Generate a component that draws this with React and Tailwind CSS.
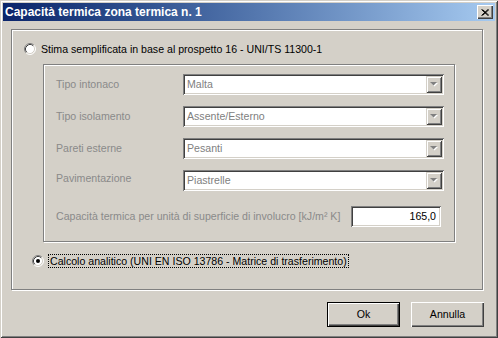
import React from 'react';

const font = { fontFamily: '"Liberation Sans", Arial, sans-serif' };

const Radio = ({ checked }) => (
  <svg width="12" height="12" viewBox="0 0 12 12" className="shrink-0">
    <circle cx="6" cy="6" r="5" fill="#ffffff" />
    <path d="M2.11 9.89 A5.5 5.5 0 0 1 9.89 2.11" fill="none" stroke="#808080" />
    <path d="M9.89 2.11 A5.5 5.5 0 0 1 2.11 9.89" fill="none" stroke="#ffffff" />
    <path d="M2.82 9.18 A4.5 4.5 0 0 1 9.18 2.82" fill="none" stroke="#404040" />
    <path d="M9.18 2.82 A4.5 4.5 0 0 1 2.82 9.18" fill="none" stroke="#d4d0c8" />
    {checked && <circle cx="6" cy="6" r="2" fill="#000000" />}
  </svg>
);

const Select = ({ value }) => (
  <div className="w-[261px] h-[21px] bg-white flex items-center shadow-[inset_1px_1px_0_#808080,inset_-1px_-1px_0_#ffffff,inset_2px_2px_0_#404040,inset_-2px_-2px_0_#d4d0c8] p-[2px]">
    <span className="flex-1 pl-[2px] text-[10.6px] text-[#808080] leading-none">{value}</span>
    <div className="w-[16px] h-[17px] bg-[#d4d0c8] flex items-center justify-center shadow-[inset_1px_1px_0_#d4d0c8,inset_-1px_-1px_0_#404040,inset_2px_2px_0_#ffffff,inset_-2px_-2px_0_#808080]">
      <svg width="8" height="5" viewBox="0 0 8 5">
        <path d="M1 1 H8 L4.5 4.5 Z" fill="#ffffff" />
        <path d="M0 0 H7 L3.5 3.5 Z" fill="#808080" />
      </svg>
    </div>
  </div>
);

const Row = ({ label, value, lift }) => (
  <div className="flex items-center h-[21px]">
    <span className={`w-[127px] text-[10.6px] text-[#8a8a8a] leading-none ${lift ? 'pb-[4px]' : ''}`}>
      {label}
    </span>
    <Select value={value} />
  </div>
);

export default function App() {
  return (
    <div
      style={font}
      className="w-[498px] h-[338px] bg-[#d4d0c8] p-[3px] flex flex-col shadow-[inset_1px_1px_0_#d4d0c8,inset_-1px_-1px_0_#404040,inset_2px_2px_0_#ffffff,inset_-2px_-2px_0_#808080]"
    >
      {/* Title bar */}
      <div className="h-[18px] flex items-center justify-between pl-[2px] pr-[2px] bg-gradient-to-r from-[#0a246a] to-[#a6caf0]">
        <span className="text-white font-bold text-[12px] leading-none">
          Capacità termica zona termica n. 1
        </span>
        <div className="w-[16px] h-[14px] bg-[#d4d0c8] flex items-center justify-center shadow-[inset_1px_1px_0_#ffffff,inset_-1px_-1px_0_#404040,inset_-2px_-2px_0_#808080]">
          <svg width="8" height="7" viewBox="0 0 8 7">
            <path d="M0.5 0.5 L7 6.5 M7 0.5 L0.5 6.5 M1.5 0.5 L8 6.5 M8 0.5 L1.5 6.5" stroke="#000000" strokeWidth="1" />
          </svg>
        </div>
      </div>

      {/* Outer group */}
      <div className="mt-[8px] ml-[8px] w-[472px] h-[261px] border border-[#808080] shadow-[1px_1px_0_#ffffff,inset_1px_1px_0_#ffffff] flex flex-col">
        <div className="mt-[13px] ml-[12px] h-[12px] flex items-center gap-[5px]">
          <Radio />
          <span className="text-[10.6px] text-black leading-none whitespace-nowrap">
            Stima semplificata in base al prospetto 16 - UNI/TS 11300-1
          </span>
        </div>

        {/* Inner group */}
        <div className="mt-[9px] ml-[31px] w-[412px] h-[178px] border border-[#808080] shadow-[1px_1px_0_#ffffff,inset_1px_1px_0_#ffffff] flex flex-col gap-[11px] pt-[9px] pl-[12px]">
          <Row label="Tipo intonaco" value="Malta" />
          <Row label="Tipo isolamento" value="Assente/Esterno" />
          <Row label="Pareti esterne" value="Pesanti" />
          <Row label="Pavimentazione" value="Piastrelle" lift />
          <div className="mt-[4px] flex items-center h-[21px]">
            <span className="w-[295px] shrink-0 whitespace-nowrap text-[10.6px] text-[#8a8a8a] leading-none">
              Capacità termica per unità di superficie di involucro [kJ/m² K]
            </span>
            <div className="w-[90px] h-[21px] bg-white flex items-center justify-end pr-[5px] shadow-[inset_1px_1px_0_#808080,inset_-1px_-1px_0_#ffffff,inset_2px_2px_0_#404040,inset_-2px_-2px_0_#d4d0c8]">
              <span className="text-[10.6px] text-black leading-none">165,0</span>
            </div>
          </div>
        </div>

        <div className="mt-[13px] ml-[20px] h-[12px] flex items-center gap-[4px]">
          <Radio checked />
          <span className="text-[10.6px] text-black leading-none whitespace-nowrap border border-dotted border-black px-[1px] py-[1px]">
            Calcolo analitico (UNI EN ISO 13786 - Matrice di trasferimento)
          </span>
        </div>
      </div>

      {/* Buttons */}
      <div className="mt-[12px] mr-[11px] flex justify-end gap-[11px]">
        <button className="w-[73px] h-[25px] bg-[#d4d0c8] border border-black flex items-center justify-center text-[10.6px] text-black shadow-[inset_1px_1px_0_#ffffff,inset_-1px_-1px_0_#404040,inset_-2px_-2px_0_#808080]">
          Ok
        </button>
        <button className="w-[73px] h-[25px] bg-[#d4d0c8] flex items-center justify-center text-[10.6px] text-black shadow-[inset_1px_1px_0_#ffffff,inset_-1px_-1px_0_#404040,inset_-2px_-2px_0_#808080]">
          Annulla
        </button>
      </div>
    </div>
  );
}
